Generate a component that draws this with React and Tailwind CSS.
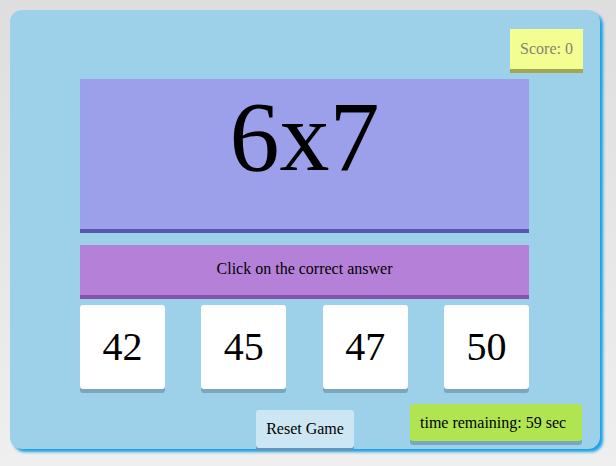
import React from 'react';

const answers = [42, 45, 47, 50];

const App = () => {
  return (
    <div
      className="min-h-[466px] bg-gradient-to-b from-[#dedede] to-[#efefef] pt-[10px] pl-[10px]"
      style={{ fontFamily: '"Liberation Serif", "Times New Roman", serif' }}
    >
      <div className="w-[590px] h-[439px] rounded-[12px] bg-[#9dd1e9] shadow-[3px_3px_3px_#1a9fe6] flex flex-col">
        {/* score */}
        <div className="flex justify-end pt-[19px] pr-[17px]">
          <div className="w-[73px] h-[44px] bg-[#f2fd92] border-b-4 border-[#a0a852] flex items-center justify-center text-[16px] text-[#83866a]">
            Score: 0
          </div>
        </div>

        {/* question */}
        <div className="ml-[70px] mt-[6px] w-[449px] h-[154px] bg-[#9ca0ea] border-b-4 border-[#5358b0] pt-[8px] text-center text-[100px] leading-none text-black">
          6x7
        </div>

        {/* instruction */}
        <div className="ml-[70px] mt-[12px] w-[449px] h-[54px] bg-[#b580d8] border-b-4 border-[#8553ad] flex items-center justify-center pb-[2px] text-[16px] text-black">
          Click on the correct answer
        </div>

        {/* answers */}
        <div className="ml-[70px] mt-[6px] w-[449px] flex justify-between">
          {answers.map((n) => (
            <div
              key={n}
              className="w-[85px] h-[84px] bg-white rounded-[3px] shadow-[0_4px_0_#7aa6be] flex items-center justify-center text-[40px] text-black cursor-pointer"
            >
              {n}
            </div>
          ))}
        </div>

        {/* bottom row */}
        <div className="flex items-start">
          <button className="ml-[246px] mt-[21px] w-[98px] h-[38px] bg-[#cde6f4] rounded-[3px] shadow-[0_3px_0_#5f98b8] text-[16px] text-black">
            Reset Game
          </button>
          <div className="ml-[56px] mt-[15px] w-[172px] h-[37px] bg-[#b0e551] rounded-[3px] shadow-[0_4px_0_#7aa6be] flex items-center pl-[10px] text-[16px] text-black">
            time remaining: 59 sec
          </div>
        </div>
      </div>
    </div>
  );
};

export default App;
